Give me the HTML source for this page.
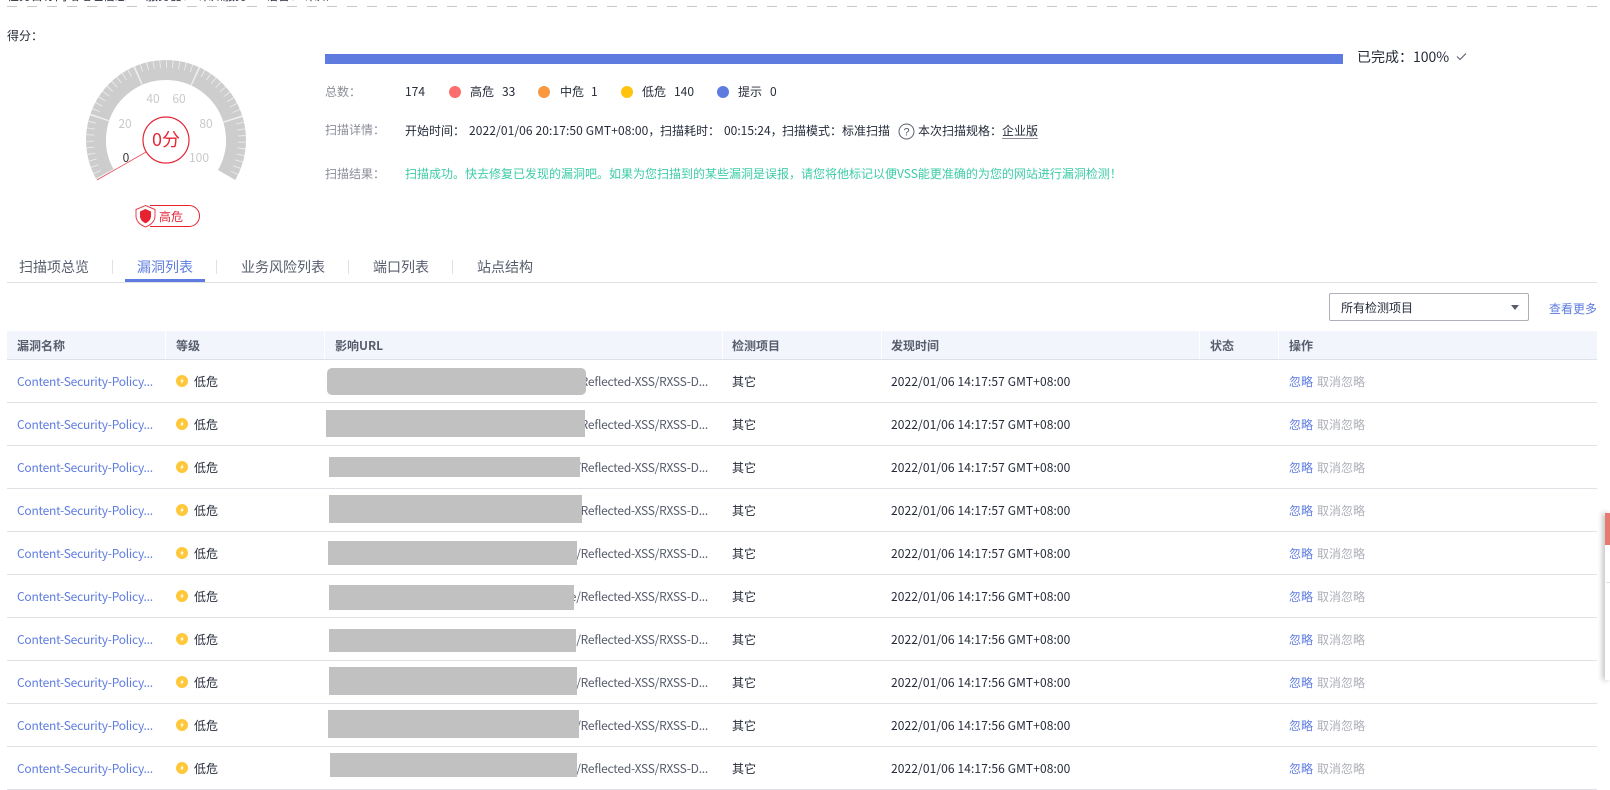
<!DOCTYPE html>
<html lang="zh-CN"><head><meta charset="utf-8"><title>扫描报告</title>
<style>
html,body{margin:0;padding:0;background:#fff}
body{width:1610px;height:783px;overflow:hidden;position:relative;font:12px/16px "Noto Sans CJK SC","Liberation Sans",sans-serif;color:#252b3a}
.a{position:absolute;white-space:nowrap}
.g{color:#8a8e99}
.dot{position:absolute;width:12px;height:12px;border-radius:50%;top:86px}
.tab{position:absolute;top:257px;font-size:14px;line-height:20px;color:#575d6c;white-space:nowrap}
.sep{position:absolute;top:260px;width:1px;height:14px;background:#dfe1e6}
.th{position:absolute;top:332px;height:28px;line-height:28px;font-weight:700;color:#575d6c;white-space:nowrap}
.vs{position:absolute;top:331px;height:28px;width:1px;background:#fff}
.r{position:absolute;left:0;width:1610px;height:43px}
.r:after{content:"";position:absolute;left:7px;width:1590px;top:42px;height:1px;background:#dfe1e6}
.r span{position:absolute;top:14px;white-space:nowrap}
.n{left:17px;color:#5e7ce0;letter-spacing:-.24px}
.l{left:194px}
.i{left:176px;top:15px!important;width:12px;height:12px}
.u{right:902px;color:#575d6c;letter-spacing:-.24px}
.o{left:732px}
.t{left:891px;letter-spacing:.1px}
.x{left:1289px;color:#5e7ce0}
.y{left:1317px;color:#adb0b8}
.b{position:absolute;background:#c1c1c1}
.top{top:-11px;line-height:14px;color:#252b3a}
</style></head><body>

<div class="a top" style="left:7px">任务目标网站地址信息</div>
<div class="a top" style="left:146px">服务器&#xFF1A;</div>
<div class="a top" style="left:199px">未知服务</div>
<div class="a top" style="left:266px">语言&#xFF1A;</div>
<div class="a top" style="left:305px">未知</div>
<div class="a" style="left:7px;top:6px;width:1590px;height:1px;background:repeating-linear-gradient(90deg,#c8c8c8 0 10px,transparent 10px 20px)"></div>

<div class="a" style="left:7px;top:28px;color:#252b3a">得分&#xFF1A;</div>

<svg class="a" style="left:0;top:0" width="300" height="240" viewBox="0 0 300 240">
<path d="M105.4 175A70 70 0 1 1 226.6 175" fill="none" stroke="#cdcdcd" stroke-width="20"/>
<path d="M100.2 178A76 76 0 1 1 231.8 178" fill="none" stroke="#efefef" stroke-width="8" stroke-dasharray="0.8 5.567"/>
<path d="M105.4 175A70 70 0 1 1 226.6 175" fill="none" stroke="#efefef" stroke-width="20" stroke-dasharray="1.5 57.14"/>
<line x1="97" y1="180" x2="146" y2="152" stroke="#e8505c" stroke-width=".8"/>
<circle cx="166" cy="140" r="23" fill="#fff" stroke="#e32636" stroke-width="1.2"/>
<g font-family="'Noto Sans CJK SC','Liberation Sans',sans-serif" font-size="12" fill="#c9c9c9" text-anchor="middle">
<text x="153" y="103">40</text><text x="179" y="103">60</text>
<text x="125" y="128">20</text><text x="206" y="128">80</text>
<text x="199" y="162">100</text><text x="126" y="162" fill="#333">0</text>
</g>
<text x="166" y="146" font-family="'Noto Sans CJK SC','Liberation Sans',sans-serif" font-size="18" fill="#e32636" text-anchor="middle">0分</text>
<path d="M150 205.5H189A10.5 10.5 0 0 1 189 226.5H150" fill="#fff" stroke="#e6232f" stroke-width="1"/>
<path d="M145.5 205.5L155 209.5V216C155 221 151 225 145.5 227C140 225 136 221 136 216V209.5Z" fill="#fff" stroke="#e6404c" stroke-width="1"/>
<path d="M145.5 209L151 211.5V216C151 219.5 148.5 222 145.5 223.2C142.5 222 140 219.5 140 216V211.5Z" fill="#e6232f"/>
<text x="159" y="221" font-family="'Noto Sans CJK SC','Liberation Sans',sans-serif" font-size="12" fill="#e32636">高危</text>
</svg>

<div class="a" style="left:325px;top:54px;width:1018px;height:10px;background:#5e7ce0"></div>
<div class="a" style="left:1357px;top:47px;font-size:14px;line-height:20px;color:#252b3a">已完成&#xFF1A;</div>
<div class="a" style="left:1413px;top:47px;font-size:14px;line-height:20px;color:#252b3a">100%</div>
<svg class="a" style="left:1455px;top:50px" width="13" height="13" viewBox="0 0 13 13"><path d="M2 6.5L5 9.5L11 3.5" fill="none" stroke="#575d6c" stroke-width="1.1"/></svg>

<div class="a g" style="left:325px;top:84px">总数&#xFF1A;</div>
<div class="a" style="left:405px;top:84px">174</div>
<i class="dot" style="left:449px;background:#fa6e6e"></i><div class="a" style="left:470px;top:84px">高危</div><div class="a" style="left:502px;top:84px">33</div>
<i class="dot" style="left:538px;background:#fa9841"></i><div class="a" style="left:560px;top:84px">中危</div><div class="a" style="left:591px;top:84px">1</div>
<i class="dot" style="left:621px;background:#ffc30e"></i><div class="a" style="left:642px;top:84px">低危</div><div class="a" style="left:674px;top:84px">140</div>
<i class="dot" style="left:717px;background:#5e7ce0"></i><div class="a" style="left:738px;top:84px">提示</div><div class="a" style="left:770px;top:84px">0</div>

<div class="a g" style="left:325px;top:122px">扫描详情&#xFF1A;</div>
<div class="a" style="left:405px;top:123px">开始时间&#xFF1A;</div>
<div class="a" style="left:469px;top:123px;letter-spacing:.1px">2022/01/06 20:17:50 GMT+08:00&#xFF0C;</div>
<div class="a" style="left:660px;top:123px">扫描耗时&#xFF1A;</div>
<div class="a" style="left:724px;top:123px">00:15:24&#xFF0C;</div>
<div class="a" style="left:782px;top:123px">扫描模式&#xFF1A;标准扫描</div>
<svg class="a" style="left:898px;top:123px" width="17" height="17" viewBox="0 0 17 17"><circle cx="8.5" cy="8.5" r="7.5" fill="none" stroke="#575d6c" stroke-width="1"/><text x="8.5" y="12.5" font-size="11" text-anchor="middle" fill="#575d6c" font-family="'Liberation Sans',sans-serif">?</text></svg>
<div class="a" style="left:918px;top:123px">本次扫描规格&#xFF1A;</div>
<div class="a" style="left:1002px;top:123px;border-bottom:1px solid #8a8e99;line-height:15px">企业版</div>

<div class="a g" style="left:325px;top:166px">扫描结果&#xFF1A;</div>
<div class="a" style="left:405px;top:166px;color:#3dcca6">扫描成功。快去修复已发现的漏洞吧。如果为您扫描到的某些漏洞是误报&#xFF0C;请您将他标记以便VSS能更准确的为您的网站进行漏洞检测&#xFF01;</div>

<div class="tab" style="left:19px">扫描项总览</div><i class="sep" style="left:112px"></i>
<div class="tab" style="left:137px;color:#5e7ce0">漏洞列表</div><i class="sep" style="left:216px"></i>
<div class="tab" style="left:241px">业务风险列表</div><i class="sep" style="left:348px"></i>
<div class="tab" style="left:373px">端口列表</div><i class="sep" style="left:452px"></i>
<div class="tab" style="left:477px">站点结构</div>
<div class="a" style="left:7px;top:282px;width:1590px;height:1px;background:#dfe1e6"></div>
<div class="a" style="left:125px;top:279px;width:80px;height:3px;background:#5e7ce0"></div>

<div class="a" style="left:1329px;top:293px;width:198px;height:26px;border:1px solid #adb0b8;border-radius:2px"></div>
<div class="a" style="left:1341px;top:300px">所有检测项目</div>
<div class="a" style="left:1511px;top:305px;width:0;height:0;border-left:4px solid transparent;border-right:4px solid transparent;border-top:5px solid #575d6c"></div>
<div class="a" style="left:1549px;top:301px;color:#5e7ce0">查看更多</div>

<div class="a" style="left:7px;top:331px;width:1590px;height:28px;background:#f2f5fc"></div>
<div class="a" style="left:7px;top:359px;width:1590px;height:1px;background:#dfe1e6"></div>
<i class="vs" style="left:165px"></i><i class="vs" style="left:324px"></i><i class="vs" style="left:722px"></i><i class="vs" style="left:881px"></i><i class="vs" style="left:1199px"></i><i class="vs" style="left:1278px"></i>
<div class="th" style="left:17px">漏洞名称</div><div class="th" style="left:176px">等级</div><div class="th" style="left:335px">影响URL</div><div class="th" style="left:732px">检测项目</div><div class="th" style="left:891px">发现时间</div><div class="th" style="left:1210px">状态</div><div class="th" style="left:1289px">操作</div>

<svg width="0" height="0" style="position:absolute"><defs><g id="ic"><circle cx="6" cy="6" r="6" fill="#ffc83a"/><path d="M6.8 2.8L4.2 6.6H5.8L5.2 9.2L7.8 5.4H6.2Z" fill="#fff"/></g></defs></svg>

<div class="r" style="top:360px"><span class="n">Content-Security-Policy...</span><span class="i"><svg width="12" height="12"><use href="#ic"/></svg></span><span class="l">低危</span><span class="u">/Reflected-XSS/RXSS-D...</span><span class="o">其它</span><span class="t">2022/01/06 14:17:57 GMT+08:00</span><span class="x">忽略</span><span class="y">取消忽略</span></div>
<div class="r" style="top:403px"><span class="n">Content-Security-Policy...</span><span class="i"><svg width="12" height="12"><use href="#ic"/></svg></span><span class="l">低危</span><span class="u">/Reflected-XSS/RXSS-D...</span><span class="o">其它</span><span class="t">2022/01/06 14:17:57 GMT+08:00</span><span class="x">忽略</span><span class="y">取消忽略</span></div>
<div class="r" style="top:446px"><span class="n">Content-Security-Policy...</span><span class="i"><svg width="12" height="12"><use href="#ic"/></svg></span><span class="l">低危</span><span class="u">/Reflected-XSS/RXSS-D...</span><span class="o">其它</span><span class="t">2022/01/06 14:17:57 GMT+08:00</span><span class="x">忽略</span><span class="y">取消忽略</span></div>
<div class="r" style="top:489px"><span class="n">Content-Security-Policy...</span><span class="i"><svg width="12" height="12"><use href="#ic"/></svg></span><span class="l">低危</span><span class="u">/Reflected-XSS/RXSS-D...</span><span class="o">其它</span><span class="t">2022/01/06 14:17:57 GMT+08:00</span><span class="x">忽略</span><span class="y">取消忽略</span></div>
<div class="r" style="top:532px"><span class="n">Content-Security-Policy...</span><span class="i"><svg width="12" height="12"><use href="#ic"/></svg></span><span class="l">低危</span><span class="u">/Reflected-XSS/RXSS-D...</span><span class="o">其它</span><span class="t">2022/01/06 14:17:57 GMT+08:00</span><span class="x">忽略</span><span class="y">取消忽略</span></div>
<div class="r" style="top:575px"><span class="n">Content-Security-Policy...</span><span class="i"><svg width="12" height="12"><use href="#ic"/></svg></span><span class="l">低危</span><span class="u">e/Reflected-XSS/RXSS-D...</span><span class="o">其它</span><span class="t">2022/01/06 14:17:56 GMT+08:00</span><span class="x">忽略</span><span class="y">取消忽略</span></div>
<div class="r" style="top:618px"><span class="n">Content-Security-Policy...</span><span class="i"><svg width="12" height="12"><use href="#ic"/></svg></span><span class="l">低危</span><span class="u">/Reflected-XSS/RXSS-D...</span><span class="o">其它</span><span class="t">2022/01/06 14:17:56 GMT+08:00</span><span class="x">忽略</span><span class="y">取消忽略</span></div>
<div class="r" style="top:661px"><span class="n">Content-Security-Policy...</span><span class="i"><svg width="12" height="12"><use href="#ic"/></svg></span><span class="l">低危</span><span class="u">/Reflected-XSS/RXSS-D...</span><span class="o">其它</span><span class="t">2022/01/06 14:17:56 GMT+08:00</span><span class="x">忽略</span><span class="y">取消忽略</span></div>
<div class="r" style="top:704px"><span class="n">Content-Security-Policy...</span><span class="i"><svg width="12" height="12"><use href="#ic"/></svg></span><span class="l">低危</span><span class="u">/Reflected-XSS/RXSS-D...</span><span class="o">其它</span><span class="t">2022/01/06 14:17:56 GMT+08:00</span><span class="x">忽略</span><span class="y">取消忽略</span></div>
<div class="r" style="top:747px"><span class="n">Content-Security-Policy...</span><span class="i"><svg width="12" height="12"><use href="#ic"/></svg></span><span class="l">低危</span><span class="u">/Reflected-XSS/RXSS-D...</span><span class="o">其它</span><span class="t">2022/01/06 14:17:56 GMT+08:00</span><span class="x">忽略</span><span class="y">取消忽略</span></div>

<div class="b" style="left:327px;top:368px;width:259px;height:27px;border-radius:5px"></div>
<div class="b" style="left:326px;top:410px;width:259px;height:27px"></div>
<div class="b" style="left:329px;top:457px;width:251px;height:20px"></div>
<div class="b" style="left:329px;top:495px;width:253px;height:28px"></div>
<div class="b" style="left:328px;top:541px;width:249px;height:24px"></div>
<div class="b" style="left:329px;top:585px;width:245px;height:25px"></div>
<div class="b" style="left:329px;top:629px;width:247px;height:23px"></div>
<div class="b" style="left:329px;top:667px;width:248px;height:28px"></div>
<div class="b" style="left:328px;top:710px;width:251px;height:28px"></div>
<div class="b" style="left:330px;top:753px;width:247px;height:24px"></div>

<div class="a" style="left:1605px;top:513px;width:5px;height:167px;background:#fff;box-shadow:-2px 0 6px rgba(0,0,0,.3)"></div>
<div class="a" style="left:1605px;top:513px;width:5px;height:32px;background:#e57a70"></div>
<div class="a" style="left:1606px;top:582px;width:4px;height:1px;background:#dfe1e6"></div>
</body></html>
